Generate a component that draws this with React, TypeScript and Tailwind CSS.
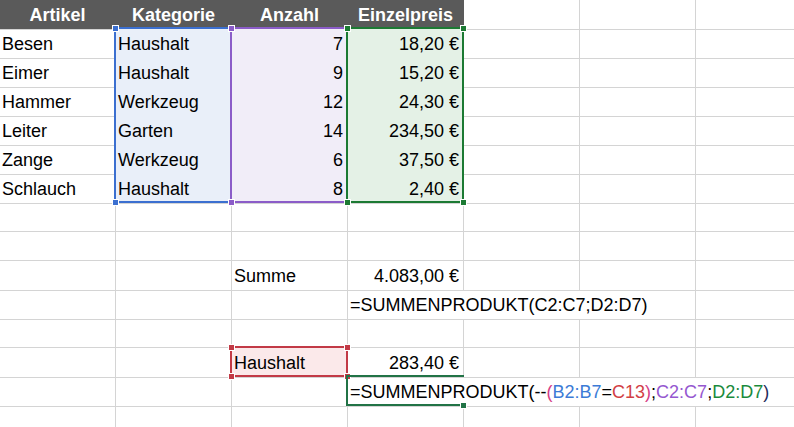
import type { ReactNode } from 'react';
import clsx from 'clsx';

type Align = 'left' | 'right' | 'center';

interface CellProps {
  children?: ReactNode;
  align?: Align;
  className?: string;
  span?: 1 | 3 | 4;
}

function Cell({ children, align = 'left', className, span = 1 }: CellProps) {
  return (
    <div
      className={clsx(
        'flex items-center pt-[2px] whitespace-nowrap border-b border-r border-[#d4d4d4] overflow-visible',
        align === 'left' && 'justify-start pl-[2px]',
        align === 'right' && 'justify-end pr-[4px]',
        align === 'center' && 'justify-center',
        span === 3 && 'col-span-3',
        span === 4 && 'col-span-4',
        className,
      )}
    >
      {children}
    </div>
  );
}

function Row({ children }: { children: ReactNode }) {
  return <div className="grid grid-cols-[repeat(7,116px)] h-[29px]">{children}</div>;
}

function Empty({ n }: { n: number }) {
  return (
    <>
      {Array.from({ length: n }).map((_, i) => (
        <Cell key={i} />
      ))}
    </>
  );
}

// fills for the highlighted reference ranges
const fillB = 'bg-[#e9eff9]';
const fillC = 'bg-[#f1edf8]';
const fillD = 'bg-[#e4f1e6]';

const items = [
  ['Besen', 'Haushalt', '7', '18,20 €'],
  ['Eimer', 'Haushalt', '9', '15,20 €'],
  ['Hammer', 'Werkzeug', '12', '24,30 €'],
  ['Leiter', 'Garten', '14', '234,50 €'],
  ['Zange', 'Werkzeug', '6', '37,50 €'],
  ['Schlauch', 'Haushalt', '8', '2,40 €'],
];

function Handle({ x, y, color }: { x: number; y: number; color: string }) {
  return (
    <div
      className={clsx('absolute w-[7px] h-[7px] border border-white', color)}
      style={{ left: x - 3, top: y - 3 }}
    />
  );
}

function RangeBox({
  x1,
  x2,
  y1,
  y2,
  border,
  fill,
}: {
  x1: number;
  x2: number;
  y1: number;
  y2: number;
  border: string;
  fill: string;
}) {
  return (
    <>
      <div
        className={clsx('absolute border-2 pointer-events-none', border)}
        style={{ left: x1 - 1, top: y1 - 1, width: x2 - x1 + 2, height: y2 - y1 + 2 }}
      />
      <Handle x={x1} y={y1} color={fill} />
      <Handle x={x2} y={y1} color={fill} />
      <Handle x={x1} y={y2} color={fill} />
      <Handle x={x2} y={y2} color={fill} />
    </>
  );
}

export default function App() {
  return (
    <div className="relative w-[794px] h-[427px] overflow-hidden bg-white text-black text-[18px] font-['Liberation_Sans',Arial,sans-serif]">
      <div className="flex flex-col">
        <Row>
          {['Artikel', 'Kategorie', 'Anzahl', 'Einzelpreis'].map((h) => (
            <Cell key={h} align="center" className="bg-[#5a5a5a] border-r-[#5a5a5a] text-white font-bold">
              {h}
            </Cell>
          ))}
          <Empty n={3} />
        </Row>

        {items.map(([a, b, c, d]) => (
          <Row key={a}>
            <Cell>{a}</Cell>
            <Cell className={fillB}>{b}</Cell>
            <Cell align="right" className={fillC}>{c}</Cell>
            <Cell align="right" className={fillD}>{d}</Cell>
            <Empty n={3} />
          </Row>
        ))}

        <Row>
          <Empty n={7} />
        </Row>
        <Row>
          <Empty n={7} />
        </Row>

        <Row>
          <Cell />
          <Cell />
          <Cell>Summe</Cell>
          <Cell align="right">4.083,00 €</Cell>
          <Empty n={3} />
        </Row>
        <Row>
          <Cell />
          <Cell />
          <Cell />
          <Cell span={3}>=SUMMENPRODUKT(C2:C7;D2:D7)</Cell>
          <Cell />
        </Row>

        <Row>
          <Empty n={7} />
        </Row>

        <Row>
          <Cell />
          <Cell />
          <Cell className="bg-[#fbe9ea]">Haushalt</Cell>
          <Cell align="right">283,40 €</Cell>
          <Empty n={3} />
        </Row>
        <Row>
          <Cell />
          <Cell />
          <Cell />
          <Cell span={4} className="border-r-0">
            <span>
              =SUMMENPRODUKT(--<span className="text-[#d63d86]">(</span>
              <span className="text-[#3c7bd6]">B2:B7</span>=<span className="text-[#d23f45]">C13</span>
              <span className="text-[#d63d86]">)</span>;<span className="text-[#9558d0]">C2:C7</span>;
              <span className="text-[#1a8a3c]">D2:D7</span>
              <span className="text-[#1f2a5a]">)</span>
            </span>
          </Cell>
        </Row>

        <Row>
          <Empty n={7} />
        </Row>
      </div>

      {/* reference range highlights */}
      <RangeBox x1={115} x2={231} y1={28} y2={202} border="border-[#3b6fd0]" fill="bg-[#3b6fd0]" />
      <RangeBox x1={231} x2={347} y1={28} y2={202} border="border-[#8b5cc8]" fill="bg-[#8b5cc8]" />
      <RangeBox x1={347} x2={463} y1={28} y2={202} border="border-[#1c7a33]" fill="bg-[#1c7a33]" />
      <RangeBox x1={231} x2={347} y1={347} y2={376} border="border-[#c23a46]" fill="bg-[#c23a46]" />

      {/* active cell D14 */}
      <div
        className="absolute border-2 border-r-0 border-[#217346] pointer-events-none"
        style={{ left: 346, top: 375, width: 118, height: 31 }}
      />
      <Handle x={463} y={405} color="bg-[#217346]" />
    </div>
  );
}
